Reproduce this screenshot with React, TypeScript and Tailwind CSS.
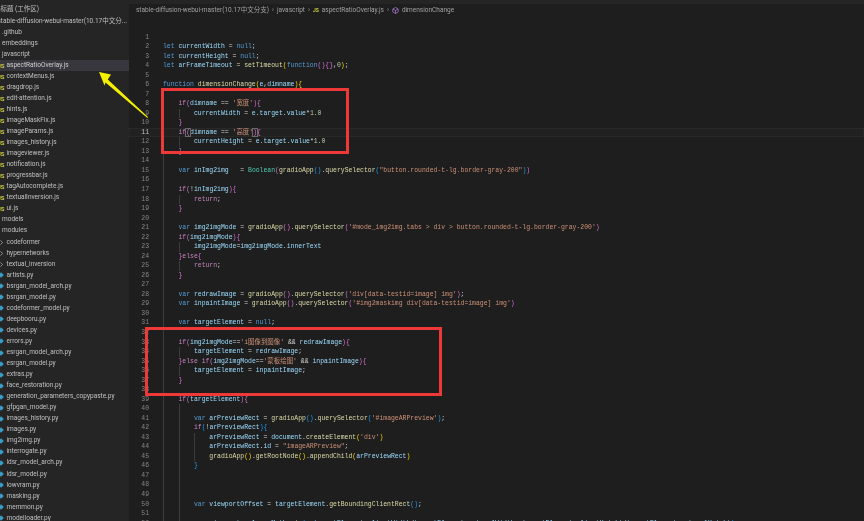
const files: [string, string, number][] = [
  ["stable-diffusion-webui-master(10.17中文分...", "root", 0],
  [".github", "none", 2],
  ["embeddings", "none", 2],
  ["javascript", "none", 2],
  ["aspectRatioOverlay.js", "js", 6],
  ["contextMenus.js", "js", 6],
  ["dragdrop.js", "js", 6],
  ["edit-attention.js", "js", 6],
  ["hints.js", "js", 6],
  ["imageMaskFix.js", "js", 6],
  ["imageParams.js", "js", 6],
  ["images_history.js", "js", 6],
  ["imageviewer.js", "js", 6],
  ["notification.js", "js", 6],
  ["progressbar.js", "js", 6],
  ["tagAutocomplete.js", "js", 6],
  ["textualInversion.js", "js", 6],
  ["ui.js", "js", 6],
  ["models", "none", 2],
  ["modules", "none", 2],
  ["codeformer", "dir", 6],
  ["hypernetworks", "dir", 6],
  ["textual_inversion", "dir", 6],
  ["artists.py", "py", 6],
  ["bsrgan_model_arch.py", "py", 6],
  ["bsrgan_model.py", "py", 6],
  ["codeformer_model.py", "py", 6],
  ["deepbooru.py", "py", 6],
  ["devices.py", "py", 6],
  ["errors.py", "py", 6],
  ["esrgan_model_arch.py", "py", 6],
  ["esrgan_model.py", "py", 6],
  ["extras.py", "py", 6],
  ["face_restoration.py", "py", 6],
  ["generation_parameters_copypaste.py", "py", 6],
  ["gfpgan_model.py", "py", 6],
  ["images_history.py", "py", 6],
  ["images.py", "py", 6],
  ["img2img.py", "py", 6],
  ["interrogate.py", "py", 6],
  ["ldsr_model_arch.py", "py", 6],
  ["ldsr_model.py", "py", 6],
  ["lowvram.py", "py", 6],
  ["masking.py", "py", 6],
  ["memmon.py", "py", 6],
  ["modelloader.py", "py", 6],
];

// token colours
const K = "text-[#569cd6]";
const P = "text-[#c586c0]";
const V = "text-[#9cdcfe]";
const F = "text-[#dcdcaa]";
const S = "text-[#ce9178]";
const N = "text-[#b5cea8]";
const T = "text-[#4ec9b0]";
const W = "text-[#d4d4d4]";
const Y = "text-[#ffd700]";
const M = "text-[#da70d6]";
const B = "text-[#179fff]";
// matched bracket on the cursor line
const MB = "text-[#da70d6] outline outline-[0.5px] outline-[#6a6a6a]";

type Tok = [string, string];

const lines: Tok[][] = [
  [],
  [["let ", K], ["currentWidth", V], [" = ", W], ["null", K], [";", W]],
  [["let ", K], ["currentHeight", V], [" = ", W], ["null", K], [";", W]],
  [["let ", K], ["arFrameTimeout", V], [" = ", W], ["setTimeout", F], ["(", Y], ["function", K], ["()", M], ["{}", M], [",", W], ["0", N], [")", Y], [";", W]],
  [],
  [["function ", K], ["dimensionChange", F], ["(", Y], ["e", V], [",", W], ["dimname", V], [")", Y], ["{", Y]],
  [],
  [["    if", P], ["(", M], ["dimname", V], [" == ", W], ["'宽度'", S], [")", M], ["{", M]],
  [["        currentWidth", V], [" = ", W], ["e", V], [".", W], ["target", V], [".", W], ["value", V], ["*", W], ["1.0", N]],
  [["    }", M]],
  [["    if", P], ["(", MB], ["dimname", V], [" == ", W], ["'高度'", S], [")", MB], ["{", M]],
  [["        currentHeight", V], [" = ", W], ["e", V], [".", W], ["target", V], [".", W], ["value", V], ["*", W], ["1.0", N]],
  [["    }", M]],
  [],
  [["    var ", K], ["inImg2img", V], ["   = ", W], ["Boolean", T], ["(", M], ["gradioApp", F], ["()", B], [".", W], ["querySelector", F], ["(", B], ["\"button.rounded-t-lg.border-gray-200\"", S], [")", B], [")", M]],
  [],
  [["    if", P], ["(", M], ["!", W], ["inImg2img", V], [")", M], ["{", M]],
  [["        return", P], [";", W]],
  [["    }", M]],
  [],
  [["    var ", K], ["img2imgMode", V], [" = ", W], ["gradioApp", F], ["()", M], [".", W], ["querySelector", F], ["(", M], ["'#mode_img2img.tabs > div > button.rounded-t-lg.border-gray-200'", S], [")", M]],
  [["    if", P], ["(", M], ["img2imgMode", V], [")", M], ["{", M]],
  [["        img2imgMode", V], ["=", W], ["img2imgMode", V], [".", W], ["innerText", V]],
  [["    }", M], ["else", P], ["{", M]],
  [["        return", P], [";", W]],
  [["    }", M]],
  [],
  [["    var ", K], ["redrawImage", V], [" = ", W], ["gradioApp", F], ["()", M], [".", W], ["querySelector", F], ["(", M], ["'div[data-testid=image] img'", S], [")", M], [";", W]],
  [["    var ", K], ["inpaintImage", V], [" = ", W], ["gradioApp", F], ["()", M], [".", W], ["querySelector", F], ["(", M], ["'#img2maskimg div[data-testid=image] img'", S], [")", M]],
  [],
  [["    var ", K], ["targetElement", V], [" = ", W], ["null", K], [";", W]],
  [],
  [["    if", P], ["(", M], ["img2imgMode", V], ["==", W], ["'i图像到图像'", S], [" && ", W], ["redrawImage", V], [")", M], ["{", M]],
  [["        targetElement", V], [" = ", W], ["redrawImage", V], [";", W]],
  [["    }", M], ["else ", P], ["if", P], ["(", M], ["img2imgMode", V], ["==", W], ["'蒙板绘图'", S], [" && ", W], ["inpaintImage", V], [")", M], ["{", M]],
  [["        targetElement", V], [" = ", W], ["inpaintImage", V], [";", W]],
  [["    }", M]],
  [],
  [["    if", P], ["(", M], ["targetElement", V], [")", M], ["{", M]],
  [],
  [["        var ", K], ["arPreviewRect", V], [" = ", W], ["gradioApp", F], ["()", B], [".", W], ["querySelector", F], ["(", B], ["'#imageARPreview'", S], [")", B], [";", W]],
  [["        if", P], ["(", B], ["!", W], ["arPreviewRect", V], [")", B], ["{", B]],
  [["            arPreviewRect", V], [" = ", W], ["document", V], [".", W], ["createElement", F], ["(", Y], ["'div'", S], [")", Y]],
  [["            arPreviewRect", V], [".", W], ["id", V], [" = ", W], ["\"imageARPreview\"", S], [";", W]],
  [["            gradioApp", F], ["()", Y], [".", W], ["getRootNode", F], ["()", Y], [".", W], ["appendChild", F], ["(", Y], ["arPreviewRect", V], [")", Y]],
  [["        }", B]],
  [],
  [],
  [],
  [["        var ", K], ["viewportOffset", V], [" = ", W], ["targetElement", V], [".", W], ["getBoundingClientRect", F], ["()", B], [";", W]],
  [],
  [["        var ", K], ["viewportscale", V], [" = ", W], ["Math", V], [".", W], ["min", F], ["(", B], ["  targetElement", V], [".", W], ["clientWidth", V], ["/", W], ["targetElement", V], [".", W], ["naturalWidth", V], [", ", W], ["targetElement", V], [".", W], ["clientHeight", V], ["/", W], ["targetElement", V], [".", W], ["naturalHeight", V], [")", B]],
];

function FileIcon({ kind }: { kind: string }) {
  if (kind === "js") {
    return <span className="absolute left-[-2.5px] top-0 font-bold text-[6px] text-[#cbcb41]">JS</span>;
  }
  if (kind === "py") {
    return <span className="absolute left-[-1.5px] top-[3.5px] w-[4px] h-[4px] rotate-45 bg-[#3b9dc8]" />;
  }
  if (kind === "dir") {
    return (
      <svg className="absolute left-0 top-[3px]" width="3" height="5" viewBox="0 0 3 5" fill="none">
        <path d="M0.4 0.4 L2.6 2.5 L0.4 4.6" stroke="#b8b8b8" strokeWidth="0.7" />
      </svg>
    );
  }
  return null;
}

function Sidebar() {
  return (
    <div className="w-[129px] shrink-0 h-full bg-[#252526] overflow-hidden font-['Roboto','Noto_Sans_CJK_SC',sans-serif] text-[6.5px] text-[#c0c0c0]">
      <div className="h-[15.6px] pt-[4px] leading-[11px] -ml-[6px] whitespace-nowrap">无标题 (工作区)</div>
      {files.map(([name, kind, pad], i) => (
        <div
          key={name}
          className={`relative h-[11.05px] leading-[11.05px] whitespace-nowrap overflow-hidden ${i === 4 ? "bg-[#37373d] text-[#d0d0d0]" : ""} ${i === 0 ? "-ml-[2.5px]" : ""}`}
        >
          <FileIcon kind={kind} />
          <span className={pad === 0 ? "pl-0" : pad === 2 ? "pl-[2px]" : "pl-[6.5px]"}>{name}</span>
        </div>
      ))}
    </div>
  );
}

// indent guides: column 0 runs through the function body, deeper ones follow the nesting
function guidesFor(n: number, toks: Tok[]) {
  const lead = toks.length ? toks[0][0].length - toks[0][0].trimStart().length : 0;
  const inTarget = n >= 40 && n <= 51;
  return [n >= 7, lead >= 8 || inTarget, lead >= 12];
}

function CodeLine({ n, toks }: { n: number; toks: Tok[] }) {
  const active = n === 11;
  const guides = guidesFor(n, toks);
  return (
    <div className={`flex h-[9.54px] leading-[9.54px] whitespace-pre ${active ? "bg-[#212121] shadow-[inset_0_0_0_0.5px_#303030]" : ""}`}>
      <span className={`w-[20px] shrink-0 text-right ${active ? "text-[#c6c6c6]" : "text-[#858585]"}`}>{n}</span>
      <span className="relative ml-[14px]">
        {guides[0] && <span className="absolute left-0 top-0 h-full w-px bg-[#3c3c3c]" />}
        {guides[1] && <span className="absolute left-[15.5px] top-0 h-full w-px bg-[#3c3c3c]" />}
        {guides[2] && <span className="absolute left-[31px] top-0 h-full w-px bg-[#3c3c3c]" />}
        {toks.map(([text, color], i) => (
          <span key={i} className={color}>
            {text}
          </span>
        ))}
      </span>
    </div>
  );
}

function Editor() {
  return (
    <div className="flex-1 min-w-0 h-full bg-[#1e1e1e] overflow-hidden">
      <div className="h-[4px] bg-[#252526]" />
      <div className="h-[28.5px] pt-[1px] pl-[7px] flex items-start gap-[3px] leading-[10px] text-[6.5px] text-[#a0a0a0] whitespace-nowrap font-['Roboto','Noto_Sans_CJK_SC',sans-serif]">
        <span>stable-diffusion-webui-master(10.17中文分支)</span>
        <span>›</span>
        <span>javascript</span>
        <span>›</span>
        <span className="font-bold text-[#cbcb41] text-[5px]">JS</span>
        <span>aspectRatioOverlay.js</span>
        <span>›</span>
        <svg className="mt-[1.5px]" width="7" height="7" viewBox="0 0 7 7" fill="none" stroke="#b180d7" strokeWidth="0.7">
          <path d="M3.5 0.5 L6.2 2 L6.2 5 L3.5 6.5 L0.8 5 L0.8 2 Z M0.8 2 L3.5 3.5 L6.2 2 M3.5 3.5 L3.5 6.5" />
        </svg>
        <span>dimensionChange</span>
      </div>
      <div className="text-[6.44px] font-['Liberation_Mono','Noto_Sans_CJK_SC',monospace]">
        {lines.map((toks, i) => (
          <CodeLine key={i} n={i + 1} toks={toks} />
        ))}
      </div>
    </div>
  );
}

export default function App() {
  return (
    <div className="relative w-[864px] h-[521px] overflow-hidden flex bg-[#1e1e1e] blur-[0.3px]">
      <Sidebar />
      <Editor />
      {/* annotations drawn over the screenshot */}
      <div className="absolute left-[161px] top-[88px] w-[188px] h-[66px] border-[3px] border-[#ef3838]" />
      <div className="absolute left-[145px] top-[327px] w-[297px] h-[69px] border-[3px] border-[#ef3838]" />
      <svg className="absolute left-[90px] top-[65px]" width="70" height="65" viewBox="90 65 70 65" fill="none">
        <path d="M99 72 L111 74.5 L107.8 79.6 L148 117 L147.4 118 L105.5 82.6 L104.5 85.5 Z" fill="#f5f000" />
      </svg>
    </div>
  );
}
